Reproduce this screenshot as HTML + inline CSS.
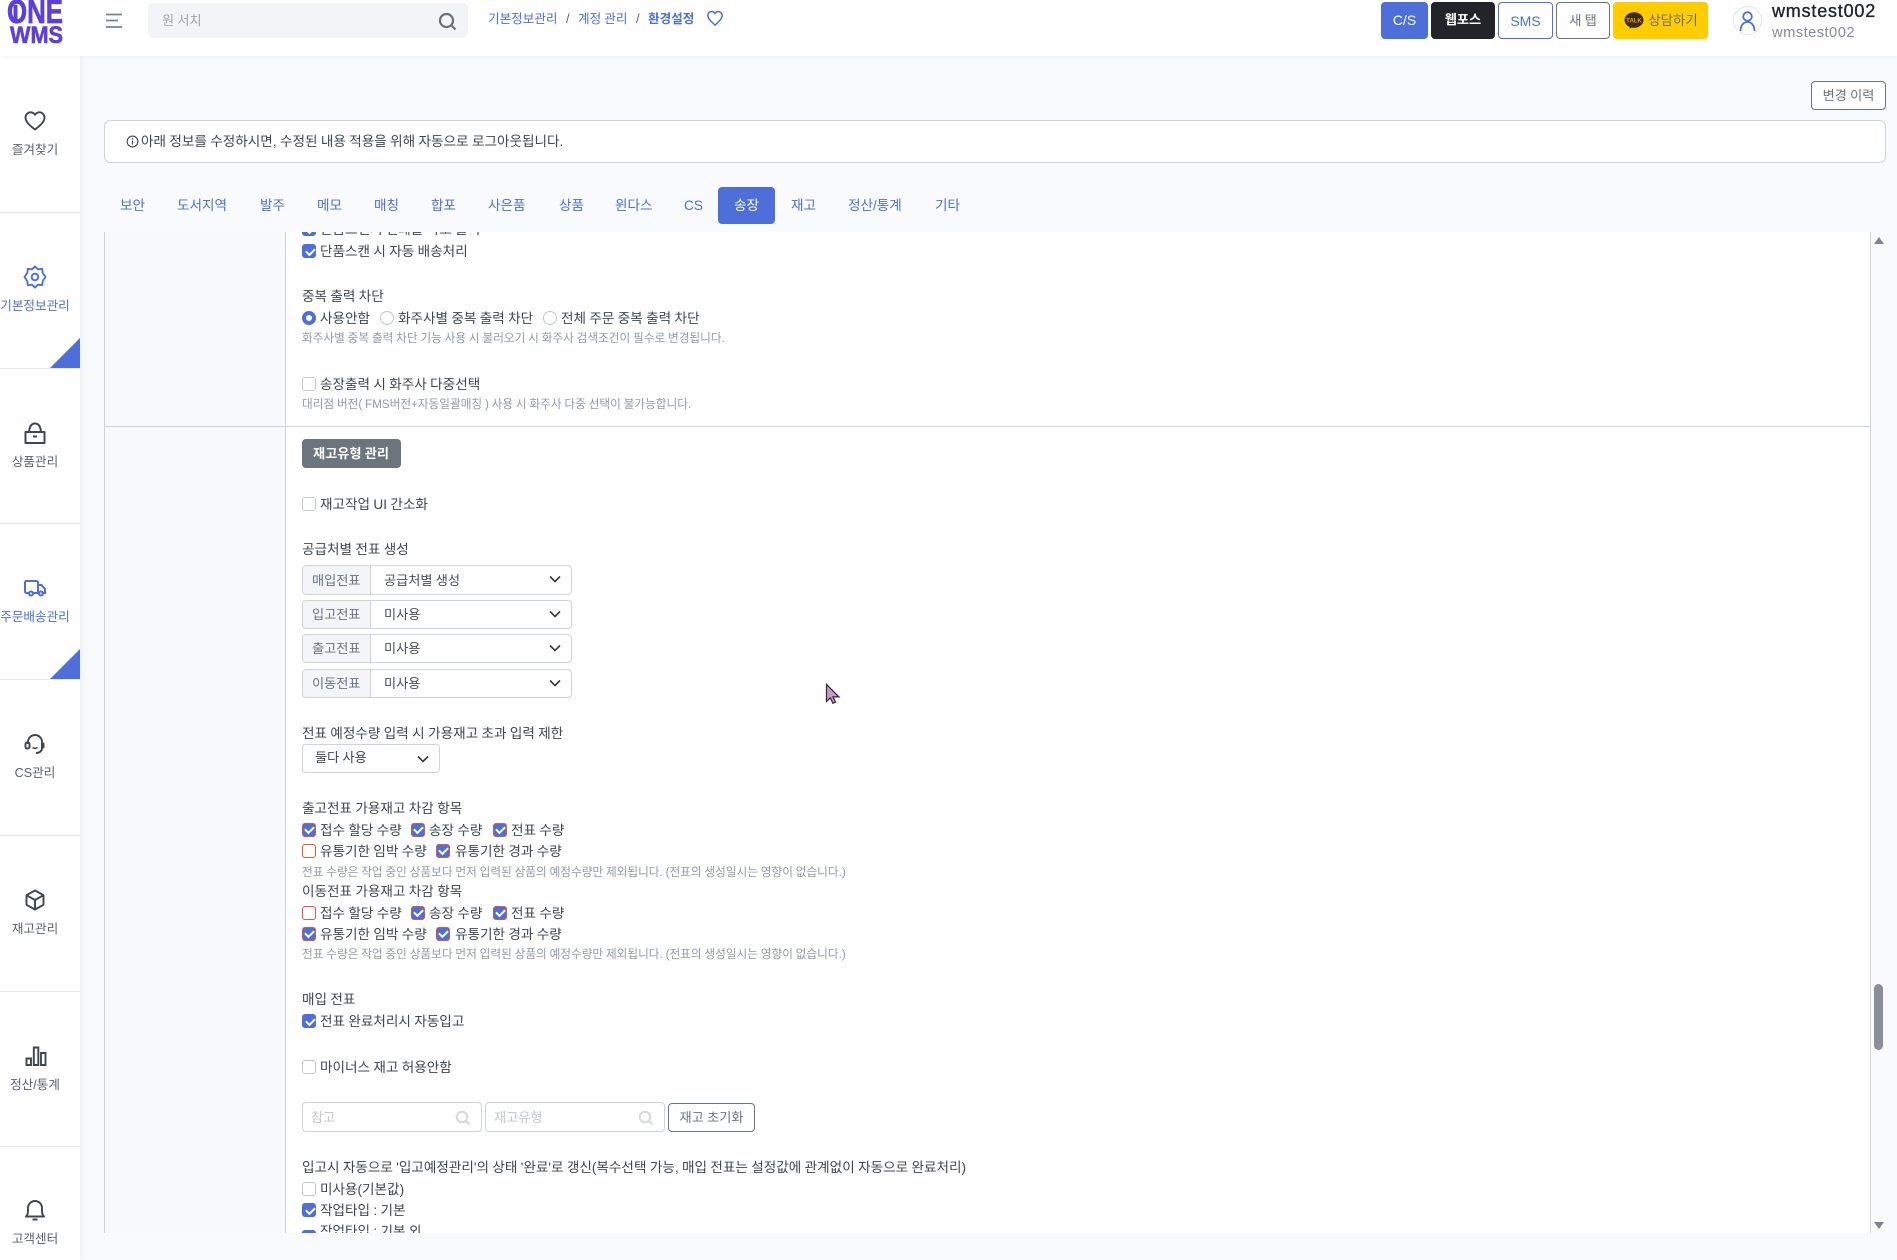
<!DOCTYPE html>
<html lang="ko"><head><meta charset="utf-8"><title>환경설정</title>
<style>
*{box-sizing:border-box}
html,body{margin:0;padding:0;width:1897px;height:1260px;overflow:hidden;background:#f9fafc;font-family:"Liberation Sans","Noto Sans CJK KR",sans-serif;color:#3f464e;word-spacing:-.4px}
.a{position:absolute}
.t{position:absolute;white-space:nowrap;line-height:20px;font-size:13.6px;color:#3f464e;margin-top:1px}
.h{font-size:11.65px;color:#9299a6}
.cb{position:absolute;width:14px;height:14px;margin-top:1px;border:1px solid #c3c8d0;border-radius:3px;background:#fff}
.cb.on{background:#4e6fd9;border-color:#4e6fd9}
.cb.on::after{content:"";position:absolute;left:2.6px;top:2.6px;width:7px;height:4px;border-left:2px solid #fff;border-bottom:2px solid #fff;transform:rotate(-45deg)}
.cb.r{border:1.5px solid #d9593d}
.cb.r.on::after{left:2.1px;top:2.1px}
.rd{position:absolute;width:14px;height:14px;border:1px solid #c3c8d0;border-radius:50%;background:#fff}
.rd.on{border:4px solid #4e6fd9}
.side{position:absolute;left:0;width:70px;text-align:center;font-size:12.6px;line-height:18px;color:#5b626b;white-space:nowrap;margin-top:1px}
.side.act{color:#4e6fd9}
.dv{position:absolute;left:0;width:80px;height:1px;background:#e6e8ec}
.tri{position:absolute;left:50px;width:30px;height:30px;background:#4e6fd9;clip-path:polygon(100% 0,100% 100%,0 100%)}
.tab{position:absolute;top:194px;font-size:13.6px;line-height:24px;color:#4e6fd9;white-space:nowrap}
.btn{position:absolute;text-align:center;border-radius:4px;font-size:13.6px;white-space:nowrap}
.grp{position:absolute;left:302px;width:270px;height:29px;border:1px solid #ced4da;border-radius:4px;background:#fff;overflow:hidden}
.grp b{position:absolute;left:0;top:0;bottom:0;width:68px;background:#f3f5f9;border-right:1px solid #ced4da;font-weight:400;font-size:13.2px;line-height:28px;color:#6b7280;padding-left:9px}
.grp span{position:absolute;left:81px;top:0;line-height:28px;font-size:13.2px;color:#4a5058;white-space:nowrap}
.chev{position:absolute}
.inp{position:absolute;top:1102px;height:30px;width:180px;border:1px solid #ced4da;border-radius:4px;background:#fff;font-size:13.2px;line-height:29px;color:#c3c7cf;padding-left:8px}
svg{display:block}
</style></head><body>

<!-- main content -->
<div class="a" style="left:104px;top:232px;width:1767px;height:1001px;background:#fff;border-left:1px solid #ced4da;border-right:1px solid #ced4da;overflow:hidden">
  <div class="a" style="left:0;top:0;width:181px;height:1001px;background:#f8f9fb;border-right:1px solid #ced4da"></div>
  <div class="a" style="left:0;top:194px;width:1766px;height:1px;background:#ced4da"></div>
  <div class="cb on" style="left:197px;top:-11px"></div>
  <div class="t" style="left:215px;top:-13px">단품스캔시 인쇄물 바로 출력</div>
  <div class="cb on" style="left:197px;top:997px"></div>
  <div class="t" style="left:215px;top:989px">작업타입 : 기본 외</div>
</div>

<div class="cb on" style="left:302px;top:243px"></div><div class="t" style="left:320px;top:241px">단품스캔 시 자동 배송처리</div>
<div class="t" style="left:302px;top:286px">중복 출력 차단</div>
<div class="rd on" style="left:302px;top:311px"></div><div class="t" style="left:320px;top:308px">사용안함</div>
<div class="rd" style="left:380px;top:311px"></div><div class="t" style="left:398px;top:308px">화주사별 중복 출력 차단</div>
<div class="rd" style="left:543px;top:311px"></div><div class="t" style="left:561px;top:308px">전체 주문 중복 출력 차단</div>
<div class="t h" style="left:302px;top:328px">화주사별 중복 출력 차단 기능 사용 시 불러오기 시 화주사 검색조건이 필수로 변경됩니다.</div>
<div class="cb" style="left:302px;top:376px"></div><div class="t" style="left:320px;top:374px">송장출력 시 화주사 다중선택</div>
<div class="t h" style="left:302px;top:394px">대리점 버전( FMS버전+자동일괄매칭 ) 사용 시 화주사 다중 선택이 불가능합니다.</div>

<div class="btn" style="left:302px;top:439px;width:99px;height:29px;background:#6c757d;color:#fff;line-height:30px;font-weight:700;font-size:13.2px;text-indent:-1px">재고유형 관리</div>
<div class="cb" style="left:302px;top:496px"></div><div class="t" style="left:320px;top:494px">재고작업 UI 간소화</div>

<div class="t" style="left:302px;top:539px">공급처별 전표 생성</div>
<div class="grp" style="top:565px;height:30px"><b style="line-height:29px">매입전표</b><span style="line-height:29px">공급처별 생성</span></div>
<div class="grp" style="top:600px"><b>입고전표</b><span>미사용</span></div>
<div class="grp" style="top:634px"><b>출고전표</b><span>미사용</span></div>
<div class="grp" style="top:669px"><b>이동전표</b><span>미사용</span></div>
<svg class="chev" style="left:549px;top:575px" width="12" height="8" viewBox="0 0 12 8"><path d="M1 1.500l5 5 5-5" fill="none" stroke="#343a40" stroke-width="1.600"/></svg>
<svg class="chev" style="left:549px;top:610px" width="12" height="8" viewBox="0 0 12 8"><path d="M1 1.500l5 5 5-5" fill="none" stroke="#343a40" stroke-width="1.600"/></svg>
<svg class="chev" style="left:549px;top:644px" width="12" height="8" viewBox="0 0 12 8"><path d="M1 1.500l5 5 5-5" fill="none" stroke="#343a40" stroke-width="1.600"/></svg>
<svg class="chev" style="left:549px;top:679px" width="12" height="8" viewBox="0 0 12 8"><path d="M1 1.500l5 5 5-5" fill="none" stroke="#343a40" stroke-width="1.600"/></svg>

<div class="t" style="left:302px;top:723px">전표 예정수량 입력 시 가용재고 초과 입력 제한</div>
<div class="a" style="left:302px;top:744px;width:138px;height:29px;border:1px solid #ced4da;border-radius:4px;background:#fff"></div>
<div class="t" style="left:315px;top:747px;font-size:13.2px">둘다 사용</div>
<svg class="chev" style="left:417px;top:755px" width="12" height="8" viewBox="0 0 12 8"><path d="M1 1.500l5 5 5-5" fill="none" stroke="#343a40" stroke-width="1.600"/></svg>

<div class="t" style="left:302px;top:798px">출고전표 가용재고 차감 항목</div>
<div class="cb on r" style="left:302px;top:822px"></div><div class="t" style="left:320px;top:820px">접수 할당 수량</div>
<div class="cb on r" style="left:411px;top:822px"></div><div class="t" style="left:429px;top:820px">송장 수량</div>
<div class="cb on r" style="left:493px;top:822px"></div><div class="t" style="left:511px;top:820px">전표 수량</div>
<div class="cb r" style="left:302px;top:843px"></div><div class="t" style="left:320px;top:841px">유통기한 임박 수량</div>
<div class="cb on r" style="left:436px;top:843px"></div><div class="t" style="left:455px;top:841px">유통기한 경과 수량</div>
<div class="t h" style="left:302px;top:862px">전표 수량은 작업 중인 상품보다 먼저 입력된 상품의 예정수량만 제외됩니다. (전표의 생성일시는 영향이 없습니다.)</div>

<div class="t" style="left:302px;top:881px">이동전표 가용재고 차감 항목</div>
<div class="cb r" style="left:302px;top:905px"></div><div class="t" style="left:320px;top:903px">접수 할당 수량</div>
<div class="cb on r" style="left:411px;top:905px"></div><div class="t" style="left:429px;top:903px">송장 수량</div>
<div class="cb on r" style="left:493px;top:905px"></div><div class="t" style="left:511px;top:903px">전표 수량</div>
<div class="cb on r" style="left:302px;top:926px"></div><div class="t" style="left:320px;top:924px">유통기한 임박 수량</div>
<div class="cb on r" style="left:436px;top:926px"></div><div class="t" style="left:455px;top:924px">유통기한 경과 수량</div>
<div class="t h" style="left:302px;top:944px">전표 수량은 작업 중인 상품보다 먼저 입력된 상품의 예정수량만 제외됩니다. (전표의 생성일시는 영향이 없습니다.)</div>

<div class="t" style="left:302px;top:989px">매입 전표</div>
<div class="cb on" style="left:302px;top:1013px"></div><div class="t" style="left:320px;top:1011px">전표 완료처리시 자동입고</div>
<div class="cb" style="left:302px;top:1059px"></div><div class="t" style="left:320px;top:1057px">마이너스 재고 허용안함</div>

<div class="inp" style="left:302px">참고</div>
<div class="inp" style="left:485px;width:180px">재고유형</div>
<svg class="a" style="left:455px;top:1110px" width="16" height="16" viewBox="0 0 16 16"><circle cx="7" cy="7" r="5.300" fill="none" stroke="#d5d8de" stroke-width="2"/><path d="M11 11l3.500 3.500" stroke="#d5d8de" stroke-width="2"/></svg>
<svg class="a" style="left:638px;top:1110px" width="16" height="16" viewBox="0 0 16 16"><circle cx="7" cy="7" r="5.300" fill="none" stroke="#d5d8de" stroke-width="2"/><path d="M11 11l3.500 3.500" stroke="#d5d8de" stroke-width="2"/></svg>
<div class="btn" style="left:668px;top:1103px;width:87px;height:29px;border:1px solid #6c757d;background:#fff;color:#6c757d;line-height:27px;font-size:13.2px">재고 초기화</div>

<div class="t" style="left:302px;top:1157px">입고시 자동으로 '입고예정관리'의 상태 '완료'로 갱신(복수선택 가능, 매입 전표는 설정값에 관계없이 자동으로 완료처리)</div>
<div class="cb" style="left:302px;top:1181px"></div><div class="t" style="left:320px;top:1179px">미사용(기본값)</div>
<div class="cb on" style="left:302px;top:1202px"></div><div class="t" style="left:320px;top:1200px">작업타입 : 기본</div>

<!-- scrollbar -->
<svg class="a" style="left:1873px;top:236px" width="12" height="10" viewBox="0 0 12 10"><path d="M6 1l5 7H1z" fill="#80848e"/></svg>
<div class="a" style="left:1874px;top:984px;width:9px;height:66px;border-radius:5px;background:#8a8e98"></div>
<svg class="a" style="left:1873px;top:1220px" width="12" height="10" viewBox="0 0 12 10"><path d="M6 9L1 2h10z" fill="#80848e"/></svg>

<!-- top strip over scroller -->
<div class="a" style="left:80px;top:56px;width:1817px;height:176px;background:#f9fafc"></div>
<div class="a" style="left:80px;top:1233px;width:1817px;height:27px;background:#f9fafc"></div>

<div class="btn" style="left:1811px;top:81px;width:75px;height:29px;border:1px solid #6c757d;background:#fff;color:#6c757d;line-height:27px;font-size:13.2px">변경 이력</div>
<div class="a" style="left:104px;top:120px;width:1782px;height:43px;background:#fff;border:1px solid #ced4da;border-radius:6px"></div>
<svg class="a" style="left:126px;top:135px" width="13" height="13" viewBox="0 0 13 13"><circle cx="6.500" cy="6.500" r="5.400" fill="none" stroke="#3f464e" stroke-width="1.100"/><path d="M6.500 5.600v4" stroke="#3f464e" stroke-width="1.200"/><circle cx="6.500" cy="3.800" r=".8" fill="#3f464e"/></svg>
<div class="t" style="left:141px;top:131px">아래 정보를 수정하시면, 수정된 내용 적용을 위해 자동으로 로그아웃됩니다.</div>

<div class="tab" style="left:120px">보안</div>
<div class="tab" style="left:177px">도서지역</div>
<div class="tab" style="left:260px">발주</div>
<div class="tab" style="left:317px">메모</div>
<div class="tab" style="left:374px">매칭</div>
<div class="tab" style="left:431px">합포</div>
<div class="tab" style="left:488px">사은품</div>
<div class="tab" style="left:559px">상품</div>
<div class="tab" style="left:615px">윈다스</div>
<div class="tab" style="left:684px">CS</div>
<div class="a" style="left:718px;top:187px;width:57px;height:37px;background:#4e6fd9;border-radius:4px"></div>
<div class="tab" style="left:734px;color:#fff">송장</div>
<div class="tab" style="left:791px">재고</div>
<div class="tab" style="left:848px">정산/통계</div>
<div class="tab" style="left:935px">기타</div>

<!-- cursor -->
<svg class="a" style="left:825px;top:683px" width="16" height="22" viewBox="0 0 16 22"><path d="M1.500 1.500v17l3.800-3.600 2.600 5.400 2.600-1.200-2.500-5.200H14z" fill="#c99bc5" stroke="#2b2b3a" stroke-width="1.200"/></svg>

<!-- sidebar -->
<div class="a" style="left:0;top:56px;width:80px;height:1204px;background:#fff;box-shadow:2px 0 6px rgba(56,65,74,.06)"></div>
<div class="dv" style="top:212px"></div><div class="dv" style="top:368px"></div><div class="dv" style="top:523px"></div><div class="dv" style="top:679px"></div><div class="dv" style="top:835px"></div><div class="dv" style="top:991px"></div><div class="dv" style="top:1146px"></div>
<div class="tri" style="top:338px"></div><div class="tri" style="top:649px"></div>

<svg class="a" style="left:23px;top:109px" width="24" height="24" viewBox="0 0 24 24"><path d="M12 20.500C6 16 2.500 12.500 2.500 8.500 2.500 5.500 5 3.300 7.500 3.300c2 0 3.500.9 4.500 2.500 1-1.600 2.500-2.500 4.500-2.500 2.500 0 5 2.200 5 5.200 0 4-3.500 7.500-9.500 12z" fill="none" stroke="#3f464e" stroke-width="1.900" stroke-linejoin="round"/></svg>
<div class="side" style="top:140px">즐겨찾기</div>

<svg class="a" style="left:23px;top:265px" width="24" height="24" viewBox="0 0 24 24"><path d="M12 1.500l3 2.800 4.200-.5.500 4.200 2.800 4-2.800 4-.5 4.200-4.200-.5-3 2.800-3-2.800-4.200.5-.5-4.200L1.500 12l2.800-4 .5-4.200 4.200.5z" fill="none" stroke="#4e6fd9" stroke-width="1.900" stroke-linejoin="round"/><circle cx="12" cy="12" r="3.300" fill="none" stroke="#4e6fd9" stroke-width="1.900"/></svg>
<div class="side act" style="top:296px">기본정보관리</div>

<svg class="a" style="left:23px;top:421px" width="24" height="24" viewBox="0 0 24 24"><path d="M2.500 11h19v11h-19zM6 11C6.500 5 9 2.500 12 2.500s5.500 2.500 6 8.500M10 15.500h4" fill="none" stroke="#3f464e" stroke-width="2" stroke-linejoin="round"/></svg>
<div class="side" style="top:452px">상품관리</div>

<svg class="a" style="left:23px;top:576px" width="24" height="24" viewBox="0 0 24 24"><path d="M6 17H3.500a1.500 1.500 0 0 1-1.500-1.500V6.500A1.500 1.500 0 0 1 3.500 5h10A1.500 1.500 0 0 1 15 6.500V17H10M15 9h3.500l3.500 4v4h-2M15 17h1" fill="none" stroke="#4e6fd9" stroke-width="2"/><circle cx="8" cy="17.500" r="2" fill="none" stroke="#4e6fd9" stroke-width="2"/><circle cx="18" cy="17.500" r="2" fill="none" stroke="#4e6fd9" stroke-width="2"/></svg>
<div class="side act" style="top:607px">주문배송관리</div>

<svg class="a" style="left:23px;top:732px" width="24" height="24" viewBox="0 0 24 24"><path d="M5 12V10a7 7 0 0 1 14 0v6c0 3-2.500 5-6 5" fill="none" stroke="#3f464e" stroke-width="1.900"/><rect x="2.500" y="10.500" width="4" height="6" rx="1.500" fill="none" stroke="#3f464e" stroke-width="1.900"/><rect x="18" y="10.500" width="3.500" height="6" rx="1.500" fill="#3f464e"/><path d="M9.500 15.500c1.500 1 3.500 1 5 0" fill="none" stroke="#3f464e" stroke-width="1.500"/></svg>
<div class="side" style="top:763px">CS관리</div>

<svg class="a" style="left:23px;top:888px" width="24" height="24" viewBox="0 0 24 24"><path d="M12 2.500l8.500 4.700v9.600L12 21.500l-8.500-4.700V7.200zM3.500 7.200L12 12l8.500-4.800M12 12v9.500" fill="none" stroke="#3f464e" stroke-width="1.900" stroke-linejoin="round"/></svg>
<div class="side" style="top:919px">재고관리</div>

<svg class="a" style="left:24px;top:1044px" width="24" height="24" viewBox="0 0 24 24"><path d="M2.500 14.500h4.500v6.500H2.500zM9.800 3.500h4.500V21H9.800zM17 9h4.500v12H17z" fill="none" stroke="#3f464e" stroke-width="1.900"/></svg>
<div class="side" style="top:1075px">정산/통계</div>

<svg class="a" style="left:23px;top:1198px" width="24" height="24" viewBox="0 0 24 24"><path d="M3 18.500c1.500-1.500 2-3 2-5.500V10a7 7 0 0 1 14 0v3c0 2.500.5 4 2 5.500zM9.500 21.500h5" fill="none" stroke="#3f464e" stroke-width="1.900" stroke-linejoin="round"/></svg>
<div class="side" style="top:1229px">고객센터</div>

<!-- header -->
<div class="a" style="left:0;top:0;width:1897px;height:56px;background:#fff;box-shadow:0 1px 4px rgba(56,65,74,.06);overflow:hidden">
  <svg class="a" style="left:0;top:0" width="70" height="50" viewBox="0 0 70 50">
    <text x="7" y="23" font-family="Liberation Sans" font-weight="700" font-size="33" fill="#5e40d8" stroke="#5e40d8" stroke-width=".7" textLength="56" lengthAdjust="spacingAndGlyphs">ONE</text>
    <rect x="13.500" y="5" width="4" height="15" fill="#5e40d8"/>
    <text x="10" y="43" font-family="Liberation Sans" font-weight="700" font-size="24" fill="#5e40d8" stroke="#5e40d8" stroke-width=".6" textLength="53" lengthAdjust="spacingAndGlyphs">WMS</text>
  </svg>
  <svg class="a" style="left:105px;top:13px" width="18" height="16" viewBox="0 0 18 16"><path d="M1 1.500h16M1 7.500h12M1 14h16" stroke="#7b828b" stroke-width="1.700"/></svg>
  <div class="a" style="left:148px;top:3px;width:320px;height:35px;background:#f3f4f8;border-radius:6px"></div>
  <div class="t" style="left:162px;top:10px;color:#a0a5ae;font-size:13.2px">원 서치</div>
  <svg class="a" style="left:438px;top:12px" width="19" height="19" viewBox="0 0 19 19"><circle cx="8.500" cy="8.500" r="6.500" fill="none" stroke="#6a7078" stroke-width="2.200"/><path d="M13 13l4.500 4.500" stroke="#6a7078" stroke-width="2.200"/></svg>
  <div class="t" style="left:488px;top:8px;font-size:12.6px;color:#4e6fd9">기본정보관리</div>
  <div class="t" style="left:566px;top:8px;font-size:12.6px;color:#5c636a">/</div>
  <div class="t" style="left:578px;top:8px;font-size:12.6px;color:#4e6fd9">계정 관리</div>
  <div class="t" style="left:636px;top:8px;font-size:12.6px;color:#5c636a">/</div>
  <div class="t" style="left:648px;top:8px;font-size:12.6px;color:#4e6fd9;font-weight:700">환경설정</div>
  <svg class="a" style="left:706px;top:9px" width="18" height="18" viewBox="0 0 24 24"><path d="M12 21.500C6 16 2.500 12.500 2.500 8.500 2.500 5.500 5 3.300 7.500 3.300c2 0 3.500.9 4.500 2.500 1-1.600 2.500-2.500 4.500-2.500 2.500 0 5 2.200 5 5.200 0 4-3.500 7.500-9.500 13z" fill="none" stroke="#4e6fd9" stroke-width="2"/></svg>

  <div class="btn" style="left:1381px;top:2px;width:47px;height:37px;background:#4e6fd9;color:#fff;line-height:36px;font-size:14px">C/S</div>
  <div class="btn" style="left:1431px;top:2px;width:64px;height:37px;background:#212529;color:#fff;line-height:36px;font-weight:700;font-size:13.2px">웹포스</div>
  <div class="btn" style="left:1498px;top:2px;width:55px;height:37px;background:#fff;border:1px solid #4e6fd9;color:#4e6fd9;line-height:36px;font-size:14px">SMS</div>
  <div class="btn" style="left:1556px;top:2px;width:54px;height:37px;background:#fff;border:1px solid #6c757d;color:#6c757d;line-height:35px;font-size:13.2px">새 탭</div>
  <div class="btn" style="left:1613px;top:2px;width:95px;height:37px;background:#ffcc00;color:#6a6f70;line-height:38px;padding-left:25px;font-size:13.4px">상담하기</div>
  <svg class="a" style="left:1624px;top:11px" width="20" height="20" viewBox="0 0 20 20"><ellipse cx="10" cy="9" rx="9.500" ry="7.800" fill="#3a2a1a"/><path d="M6 14l-.5 4 4-3z" fill="#3a2a1a"/><text x="10" y="11.500" font-family="Liberation Sans" font-size="6" font-weight="700" fill="#ff9a1a" text-anchor="middle">TALK</text></svg>
  <svg class="a" style="left:1733px;top:6px" width="29" height="29" viewBox="0 0 29 29"><circle cx="14.500" cy="14.500" r="14" fill="#fff" stroke="#e3e5ea"/><circle cx="14.500" cy="10.500" r="4.300" fill="none" stroke="#4e6fd9" stroke-width="1.800"/><path d="M7.500 25c0-5.500 3-9 7-9s7 3.500 7 9" fill="none" stroke="#4e6fd9" stroke-width="1.800"/></svg>
  <div class="t" style="left:1772px;top:0;font-size:18px;letter-spacing:.8px;color:#212529;-webkit-text-stroke:.35px #212529">wmstest002</div>
  <div class="t" style="left:1772px;top:22px;font-size:14.800px;letter-spacing:.4px;color:#878a99">wmstest002</div>
</div>
</body></html>
